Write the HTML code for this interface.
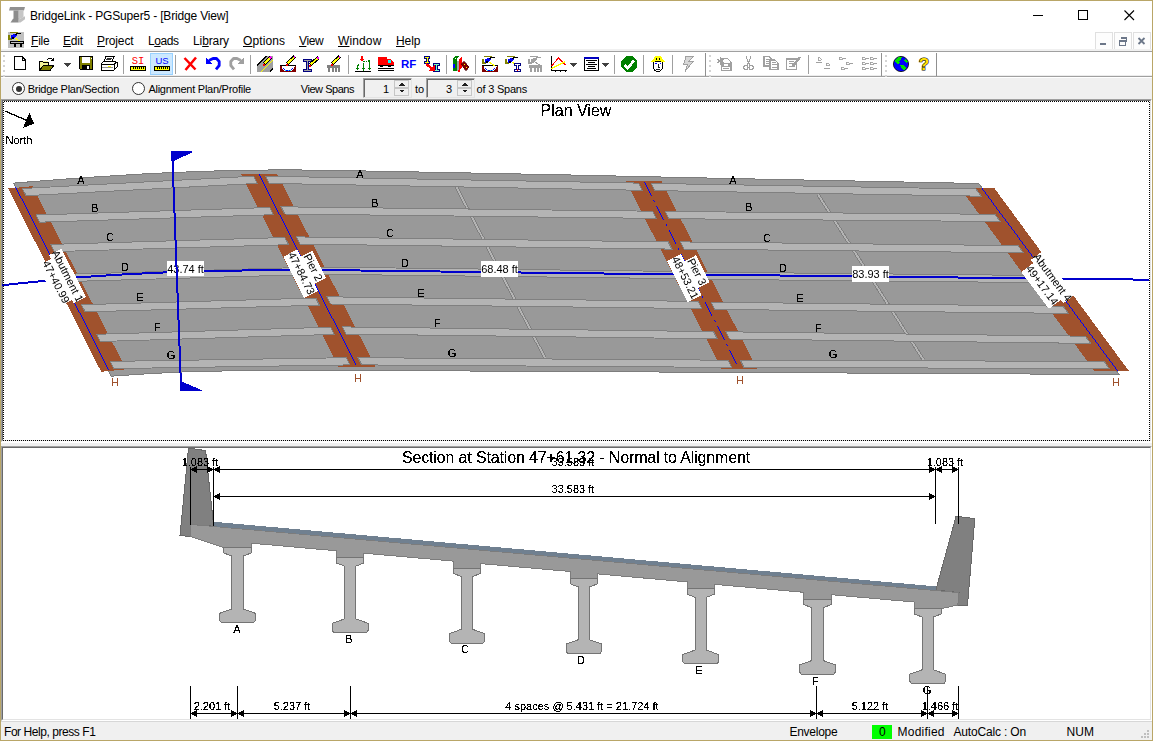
<!DOCTYPE html>
<html><head><meta charset="utf-8"><title>BridgeLink - PGSuper5 - [Bridge View]</title>
<style>
html,body{margin:0;padding:0;background:#fff;}
body{width:1153px;height:741px;overflow:hidden;position:relative;font-family:"Liberation Sans",Arial,sans-serif;font-size:12px;color:#000;}
.abs{position:absolute;}
#frame{position:absolute;left:0;top:0;width:1151px;height:739px;border:1px solid #b9a667;pointer-events:none;z-index:50}
#title{left:30px;top:9px;font-size:12px;white-space:nowrap;}
.menu{top:34px;font-size:12px;white-space:nowrap}
.menu u{text-decoration:underline;text-underline-offset:1px}
#mline{left:1px;top:49px;width:1151px;height:2px;background:#f0f0f0;border-bottom:1px solid #a0a0a0}
#tbline{left:1px;top:75px;width:1151px;height:1px;background:#a0a0a0;border-top:1px solid #ececec;border-bottom:1px solid #fff}
#dlg{left:1px;top:78px;width:1151px;height:21px;background:#f0f0f0;font-size:11px}
#dlg span.t{position:absolute;top:5px;white-space:nowrap}
.radio{position:absolute;top:4px;width:11px;height:11px;border:1px solid #333;border-radius:50%;background:#fff}
.radio i{position:absolute;left:2.5px;top:2.5px;width:6px;height:6px;border-radius:50%;background:#333}
.edit{position:absolute;top:0px;height:20px;background:#f0f0f0;border:1px solid;border-color:#a0a0a0 #e3e3e3 #e3e3e3 #a0a0a0;box-sizing:border-box;box-shadow:inset 1px 1px 0 #696969}
.spin{position:absolute;top:2px;width:15px;height:16px;background:#f0f0f0;border:1px solid #c6c6c6;box-sizing:border-box}.spin i{position:absolute;left:0;right:0;top:6px;height:2px;background:#c6c6c6}
.pane{border-top:1px solid #a0a0a0;border-left:1px solid #a0a0a0;border-right:1px solid #fff;border-bottom:1px solid #fff;background:#fff}
.pane>div{position:absolute;left:0;top:0;right:0;bottom:0;border-top:1px solid #696969;border-left:1px solid #696969;border-right:1px solid #e3e3e3;border-bottom:1px solid #e3e3e3}
#split{left:1px;top:443px;width:1151px;height:3px;background:#f0f0f0}
#status{left:1px;top:721px;width:1151px;height:18px;background:#f0f0f0;border-top:1px solid #d7d7d7;font-size:12px}
#status span{position:absolute;top:3px;white-space:nowrap}
.mdib{position:absolute;top:32px;width:16px;height:16px;border:1px solid #e0e0e0;background:#fdfdfd}
</style></head><body>
<div id="title" class="abs" style="letter-spacing:-0.163px">BridgeLink - PGSuper5 - [Bridge View]</div>
<span class="abs menu" style="left:31px;letter-spacing:-0.21px"><u>F</u>ile</span>
<span class="abs menu" style="left:63px;letter-spacing:-0.17px"><u>E</u>dit</span>
<span class="abs menu" style="left:97px;letter-spacing:-0.12px"><u>P</u>roject</span>
<span class="abs menu" style="left:148px;letter-spacing:-0.42px">L<u>o</u>ads</span>
<span class="abs menu" style="left:193px;letter-spacing:-0.1px">Li<u>b</u>rary</span>
<span class="abs menu" style="left:243px;letter-spacing:0.09px"><u>O</u>ptions</span>
<span class="abs menu" style="left:299px;letter-spacing:-0.4px"><u>V</u>iew</span>
<span class="abs menu" style="left:338px;letter-spacing:0.13px"><u>W</u>indow</span>
<span class="abs menu" style="left:396px;letter-spacing:-0.07px"><u>H</u>elp</span>
<div class="mdib" style="left:1095px"></div><div class="mdib" style="left:1114px"></div><div class="mdib" style="left:1133px"></div>
<div id="mline" class="abs"></div>
<div id="tbline" class="abs"></div>
<div id="dlg" class="abs">
<div class="radio" style="left:11px"><i></i></div>
<span class="t" style="left:26.7px;letter-spacing:-0.28px">Bridge Plan/Section</span>
<div class="radio" style="left:131px"></div>
<span class="t" style="left:147.4px;letter-spacing:-0.256px">Alignment Plan/Profile</span>
<span class="t" style="left:299.8px;letter-spacing:-0.47px">View Spans</span>
<div class="edit" style="left:362px;width:49px"></div><div class="spin" style="left:393px"><i></i></div><span class="t" style="left:382px">1</span>
<span class="t" style="left:414px;letter-spacing:-0.09px">to</span>
<div class="edit" style="left:425px;width:49px"></div><div class="spin" style="left:456px"><i></i></div><span class="t" style="left:445px">3</span>
<span class="t" style="left:475.6px;letter-spacing:-0.22px">of 3 Spans</span>
</div>
<div class="abs pane" style="left:1px;top:99px;width:1149px;height:341px"><div></div></div>
<div id="split" class="abs"></div>
<div class="abs pane" style="left:1px;top:446px;width:1149px;height:273px"><div></div></div>
<div id="status" class="abs">
<span style="left:3px;letter-spacing:-0.44px">For Help, press F1</span>
<span style="left:788.4px;letter-spacing:-0.256px">Envelope</span>
<div class="abs" style="left:871px;top:3px;width:20px;height:14px;background:#00ff00"></div>
<span style="left:878px">0</span>
<span style="left:896.6px;letter-spacing:0.218px">Modified</span>
<span style="left:952.5px;letter-spacing:-0.17px">AutoCalc : On</span>
<span style="left:1065.4px;letter-spacing:0.09px">NUM</span>
</div>
<svg id="gfx" width="1153" height="741" viewBox="0 0 1153 741" style="position:absolute;left:0;top:0" font-family="Liberation Sans, Arial, sans-serif"><defs><filter id="thr" x="0" y="0" width="1153" height="741" filterUnits="userSpaceOnUse" color-interpolation-filters="sRGB"><feComponentTransfer><feFuncA type="discrete" tableValues="0 0 1 1 1"/></feComponentTransfer></filter></defs><g shape-rendering="crispEdges"><polygon points="13.5,183.1 80.0,177.9 150.0,173.5 200.0,171.4 240.0,170.3 288.0,169.8 350.0,170.7 450.0,172.6 576.0,175.1 642.0,176.6 734.0,178.6 864.0,181.2 978.7,183.5 1119.3,374.6 1000.0,373.8 864.0,373.1 738.0,372.4 576.0,371.6 450.0,370.9 357.0,370.4 288.0,370.1 240.0,370.6 184.0,371.9 150.0,373.6 111.2,376.2" fill="#999999" stroke="#7d7d7d" stroke-width="1"/>
<line x1="456.3" y1="186.8" x2="545.0" y2="358.0" stroke="#808080" stroke-width="3.5"/>
<line x1="456.3" y1="186.8" x2="545.0" y2="358.0" stroke="#b4b4b4" stroke-width="1.7"/>
<line x1="818.0" y1="194.5" x2="923.5" y2="360.0" stroke="#808080" stroke-width="3.5"/>
<line x1="818.0" y1="194.5" x2="923.5" y2="360.0" stroke="#b4b4b4" stroke-width="1.7"/>
<polygon points="8.1,188.5 32.5,186.2 126.2,369.3 101.2,371.8" fill="#a0522d"/>
<polygon points="241.2,174.4 277.4,174.4 375.3,366.5 338.5,366.5" fill="#a0522d"/>
<polygon points="625.8,181.1 661.4,181.1 757.3,369.2 721.7,369.2" fill="#a0522d"/>
<polygon points="960.0,188.1 994.3,188.1 1128.6,370.6 1094.3,370.6" fill="#a0522d"/>
<polygon points="22.4,188.5 253.7,176.2 257.3,183.4 26.1,195.7" fill="#b4b4b4" stroke="#808080" stroke-width="1"/>
<polygon points="35.9,215.0 269.6,207.5 273.3,214.7 39.6,222.2" fill="#b4b4b4" stroke="#808080" stroke-width="1"/>
<polygon points="50.9,244.4 284.9,237.5 288.6,244.7 54.5,251.6" fill="#b4b4b4" stroke="#808080" stroke-width="1"/>
<polygon points="66.1,274.3 300.2,267.5 303.9,274.7 69.7,281.5" fill="#b4b4b4" stroke="#808080" stroke-width="1"/>
<polygon points="81.5,304.7 315.8,298.0 319.4,305.2 85.2,311.9" fill="#b4b4b4" stroke="#808080" stroke-width="1"/>
<polygon points="96.6,334.3 330.6,327.2 334.3,334.4 100.3,341.5" fill="#b4b4b4" stroke="#808080" stroke-width="1"/>
<polygon points="110.4,361.4 346.2,357.7 349.8,364.9 114.0,368.6" fill="#b4b4b4" stroke="#808080" stroke-width="1"/>
<polygon points="265.6,176.2 638.5,183.1 642.1,190.3 269.2,183.4" fill="#b4b4b4" stroke="#808080" stroke-width="1"/>
<polygon points="281.2,206.8 652.7,211.2 656.3,218.4 284.8,214.0" fill="#b4b4b4" stroke="#808080" stroke-width="1"/>
<polygon points="296.5,236.9 668.2,241.9 671.8,249.1 300.2,244.1" fill="#b4b4b4" stroke="#808080" stroke-width="1"/>
<polygon points="311.9,267.0 683.2,271.5 686.8,278.7 315.5,274.2" fill="#b4b4b4" stroke="#808080" stroke-width="1"/>
<polygon points="327.0,296.8 698.3,301.4 701.9,308.6 330.7,304.0" fill="#b4b4b4" stroke="#808080" stroke-width="1"/>
<polygon points="342.4,326.9 713.5,331.6 717.1,338.8 346.1,334.1" fill="#b4b4b4" stroke="#808080" stroke-width="1"/>
<polygon points="358.1,357.7 728.0,360.2 731.6,367.4 361.7,364.9" fill="#b4b4b4" stroke="#808080" stroke-width="1"/>
<polygon points="651.1,183.4 976.0,189.0 981.3,196.2 654.7,190.6" fill="#b4b4b4" stroke="#808080" stroke-width="1"/>
<polygon points="665.3,211.5 994.8,214.3 1000.1,221.5 668.9,218.7" fill="#b4b4b4" stroke="#808080" stroke-width="1"/>
<polygon points="680.6,241.9 1018.0,245.6 1023.4,252.8 684.2,249.1" fill="#b4b4b4" stroke="#808080" stroke-width="1"/>
<polygon points="695.8,272.0 1040.2,275.5 1045.6,282.7 699.4,279.2" fill="#b4b4b4" stroke="#808080" stroke-width="1"/>
<polygon points="711.1,302.2 1063.0,306.2 1068.4,313.4 714.7,309.4" fill="#b4b4b4" stroke="#808080" stroke-width="1"/>
<polygon points="726.0,331.8 1085.3,336.2 1090.7,343.4 729.7,339.0" fill="#b4b4b4" stroke="#808080" stroke-width="1"/>
<polygon points="740.4,360.2 1104.1,361.4 1109.4,368.6 744.0,367.4" fill="#b4b4b4" stroke="#808080" stroke-width="1"/>
<path d="M15.5,187V188M16.5,188V190M17.5,190V192M18.5,192V194M19.5,194V196M20.5,196V198M21.5,198V199M22.5,199V201M23.5,201V203M24.5,203V205M25.5,205V207M26.5,207V209M27.5,209V211M28.5,211V213M29.5,213V215M30.5,215V217M31.5,217V219M32.5,219V221M33.5,221V223M34.5,223V225M35.5,225V227M36.5,227V229M37.5,229V231M38.5,231V233M39.5,233V235M40.5,235V237M41.5,237V239M42.5,239V241M43.5,241V243M44.5,243V245M45.5,245V247M46.5,247V249M47.5,249V251M48.5,251V253M49.5,253V255M50.5,255V256M51.5,256V258M52.5,258V260M53.5,260V262M54.5,262V264M55.5,264V266M56.5,266V268M57.5,268V270M58.5,270V272M59.5,272V274M60.5,274V276M61.5,276V278M62.5,278V280M63.5,280V282M64.5,282V284M65.5,284V286M66.5,286V288M67.5,288V290M68.5,290V292M69.5,292V294M70.5,294V296M71.5,296V298M72.5,298V300M73.5,300V302M74.5,302V304M75.5,304V306M76.5,306V308M77.5,308V310M78.5,310V312M79.5,312V313M80.5,313V315M81.5,315V317M82.5,317V319M83.5,319V321M84.5,321V323M85.5,323V325M86.5,325V327M87.5,327V329M88.5,329V331M89.5,331V333M90.5,333V335M91.5,335V337M92.5,337V339M93.5,339V341M94.5,341V343M95.5,343V345M96.5,345V347M97.5,347V349M98.5,349V351M99.5,351V353M100.5,353V355M101.5,355V357M102.5,357V359M103.5,359V361M104.5,361V363M105.5,363V365M106.5,365V367M107.5,367V369M108.5,369V370" stroke="#0000ff" stroke-width="1" fill="none"/>
<path d="M259.5,174V176M260.5,176V178M261.5,178V180M262.5,180V182M263.5,182V184M264.5,184V186M265.5,186V188M266.5,188V190M267.5,190V192M268.5,192V194M269.5,194V196M270.5,196V198M271.5,198V200M272.5,200V202M273.5,202V204M274.5,204V206M275.5,206V208M276.5,208V210M277.5,210V212M278.5,212V214M279.5,214V215M280.5,215V217M281.5,217V219M282.5,219V221M283.5,221V223M284.5,223V225M285.5,225V227M286.5,227V229M287.5,229V231M288.5,231V233M289.5,233V235M290.5,235V237M291.5,237V239M292.5,239V241M293.5,241V243M294.5,243V245M295.5,245V247M296.5,247V249M297.5,249V251M298.5,251V253M299.5,253V255M300.5,255V257M301.5,257V259M302.5,259V261M303.5,261V263M304.5,263V265M305.5,265V267M306.5,267V268M307.5,268V270M308.5,270V272M309.5,272V274M310.5,274V276M311.5,276V278M312.5,278V280M313.5,280V282M314.5,282V284M315.5,284V286M316.5,286V288M317.5,288V290M318.5,290V292M319.5,292V294M320.5,294V296M321.5,296V298M322.5,298V300M323.5,300V302M324.5,302V304M325.5,304V306M326.5,306V308M327.5,308V310M328.5,310V312M329.5,312V314M330.5,314V316M331.5,316V318M332.5,318V319M333.5,319V321M334.5,321V323M335.5,323V325M336.5,325V327M337.5,327V329M338.5,329V331M339.5,331V333M340.5,333V335M341.5,335V337M342.5,337V339M343.5,339V341M344.5,341V343M345.5,343V345M346.5,345V347M347.5,347V349M348.5,349V351M349.5,351V353M350.5,353V355M351.5,355V357M352.5,357V359M353.5,359V361M354.5,361V363M355.5,363V365" stroke="#0000ff" stroke-width="1" fill="none"/>
<path d="M644.5,182V183M645.5,183V185M646.5,185V187M647.5,187V189M648.5,189V191M649.5,191V193M650.5,193V195M651.5,195V196M653.5,200V201M654.5,201V202M656.5,206V207M657.5,207V209M658.5,209V211M659.5,211V213M660.5,213V215M661.5,215V217M662.5,217V219M663.5,219V220M666.5,224V226M669.5,230V232M670.5,232V234M671.5,234V236M672.5,236V238M673.5,238V240M674.5,240V242M675.5,242V244M678.5,248V250M681.5,254V256M682.5,256V258M683.5,258V260M684.5,260V262M685.5,262V264M686.5,264V266M687.5,266V268M690.5,272V274M693.5,278V280M694.5,280V282M695.5,282V284M696.5,284V286M697.5,286V288M698.5,288V290M699.5,290V292M702.5,296V298M705.5,302V304M706.5,304V306M707.5,306V308M708.5,308V310M709.5,310V312M710.5,312V314M711.5,314V316M714.5,320V321M715.5,321V322M717.5,326V327M718.5,327V329M719.5,329V331M720.5,331V333M721.5,333V335M722.5,335V337M723.5,337V339M724.5,339V340M726.5,344V345M727.5,345V346M729.5,350V351M730.5,351V353M731.5,353V355M732.5,355V357M733.5,357V359M734.5,359V361M735.5,361V363M736.5,363V364" stroke="#0000ff" stroke-width="1" fill="none"/>
<path d="M982.5,188V190M983.5,190V191M984.5,191V192M985.5,192V194M986.5,194V195M987.5,195V196M988.5,196V198M989.5,198V199M990.5,199V200M991.5,200V202M992.5,202V203M993.5,203V205M994.5,205V206M995.5,206V207M996.5,207V209M997.5,209V210M998.5,210V211M999.5,211V213M1000.5,213V214M1001.5,214V215M1002.5,215V217M1003.5,217V218M1004.5,218V219M1005.5,219V221M1006.5,221V222M1007.5,222V223M1008.5,223V225M1009.5,225V226M1010.5,226V227M1011.5,227V229M1012.5,229V230M1013.5,230V231M1014.5,231V233M1015.5,233V234M1016.5,234V235M1017.5,235V237M1018.5,237V238M1019.5,238V240M1020.5,240V241M1021.5,241V242M1022.5,242V244M1023.5,244V245M1024.5,245V246M1025.5,246V248M1026.5,248V249M1027.5,249V250M1028.5,250V252M1029.5,252V253M1030.5,253V254M1031.5,254V256M1032.5,256V257M1033.5,257V258M1034.5,258V260M1035.5,260V261M1036.5,261V262M1037.5,262V264M1038.5,264V265M1039.5,265V266M1040.5,266V268M1041.5,268V269M1042.5,269V270M1043.5,270V272M1044.5,272V273M1045.5,273V275M1046.5,275V276M1047.5,276V277M1048.5,277V279M1049.5,279V280M1050.5,280V281M1051.5,281V283M1052.5,283V284M1053.5,284V285M1054.5,285V287M1055.5,287V288M1056.5,288V289M1057.5,289V291M1058.5,291V292M1059.5,292V293M1060.5,293V295M1061.5,295V296M1062.5,296V297M1063.5,297V299M1064.5,299V300M1065.5,300V301M1066.5,301V303M1067.5,303V304M1068.5,304V305M1069.5,305V307M1070.5,307V308M1071.5,308V309M1072.5,309V311M1073.5,311V312M1074.5,312V314M1075.5,314V315M1076.5,315V316M1077.5,316V318M1078.5,318V319M1079.5,319V320M1080.5,320V322M1081.5,322V323M1082.5,323V324M1083.5,324V326M1084.5,326V327M1085.5,327V328M1086.5,328V330M1087.5,330V331M1088.5,331V332M1089.5,332V334M1090.5,334V335M1091.5,335V336M1092.5,336V338M1093.5,338V339M1094.5,339V340M1095.5,340V342M1096.5,342V343M1097.5,343V344M1098.5,344V346M1099.5,346V347M1100.5,347V349M1101.5,349V350M1102.5,350V351M1103.5,351V353M1104.5,353V354M1105.5,354V355M1106.5,355V357M1107.5,357V358M1108.5,358V359M1109.5,359V361M1110.5,361V362M1111.5,362V363M1112.5,363V365M1113.5,365V366M1114.5,366V367M1115.5,367V369M1116.5,369V370M1117.5,370V371" stroke="#0000ff" stroke-width="1" fill="none"/>
<polyline points="2.0,285.2 40.0,281.3 75.0,277.6 120.0,274.6 165.0,272.4 220.0,270.8 288.0,269.9 320.0,270.0 400.0,271.0 480.0,272.0 576.0,273.2 700.0,274.6 851.0,276.3 1029.0,278.3 1149.0,279.7" fill="none" stroke="#0000cd" stroke-width="2"/></g><g filter="url(#thr)"><text x="81.0" y="184.0" font-size="11" fill="#000" text-anchor="middle">A</text>
<text x="95.0" y="212.0" font-size="11" fill="#000" text-anchor="middle">B</text>
<text x="110.0" y="241.0" font-size="11" fill="#000" text-anchor="middle">C</text>
<text x="125.0" y="271.0" font-size="11" fill="#000" text-anchor="middle">D</text>
<text x="140.0" y="301.0" font-size="11" fill="#000" text-anchor="middle">E</text>
<text x="157.0" y="331.0" font-size="11" fill="#000" text-anchor="middle">F</text>
<text x="171.0" y="359.0" font-size="11" fill="#000" text-anchor="middle">G</text>
<text x="360.0" y="178.0" font-size="11" fill="#000" text-anchor="middle">A</text>
<text x="375.0" y="207.0" font-size="11" fill="#000" text-anchor="middle">B</text>
<text x="390.0" y="237.0" font-size="11" fill="#000" text-anchor="middle">C</text>
<text x="405.0" y="267.0" font-size="11" fill="#000" text-anchor="middle">D</text>
<text x="421.0" y="297.0" font-size="11" fill="#000" text-anchor="middle">E</text>
<text x="437.0" y="327.0" font-size="11" fill="#000" text-anchor="middle">F</text>
<text x="452.0" y="357.0" font-size="11" fill="#000" text-anchor="middle">G</text>
<text x="733.0" y="184.0" font-size="11" fill="#000" text-anchor="middle">A</text>
<text x="749.0" y="211.0" font-size="11" fill="#000" text-anchor="middle">B</text>
<text x="767.0" y="242.0" font-size="11" fill="#000" text-anchor="middle">C</text>
<text x="783.0" y="272.0" font-size="11" fill="#000" text-anchor="middle">D</text>
<text x="800.0" y="302.0" font-size="11" fill="#000" text-anchor="middle">E</text>
<text x="818.0" y="332.0" font-size="11" fill="#000" text-anchor="middle">F</text>
<text x="833.0" y="358.0" font-size="11" fill="#000" text-anchor="middle">G</text>
<text x="115.0" y="386.0" font-size="11" fill="#a0522d" text-anchor="middle">H</text>
<text x="358.0" y="382.0" font-size="11" fill="#a0522d" text-anchor="middle">H</text>
<text x="740.0" y="384.0" font-size="11" fill="#a0522d" text-anchor="middle">H</text>
<text x="1116.0" y="386.0" font-size="11" fill="#a0522d" text-anchor="middle">H</text>
<rect x="167" y="261" width="37" height="15" fill="#fff"/>
<text x="185.5" y="272.5" font-size="11" fill="#000" text-anchor="middle">43.74 ft</text>
<rect x="481" y="261" width="37" height="16" fill="#fff"/>
<text x="499.5" y="272.5" font-size="11" fill="#000" text-anchor="middle">68.48 ft</text>
<rect x="852" y="266" width="37" height="16" fill="#fff"/>
<text x="870.5" y="277.5" font-size="11" fill="#000" text-anchor="middle">83.93 ft</text>
<g transform="translate(62.1,278.9) rotate(63.0)"><rect x="-27.0" y="-13" width="54.0" height="13.6" fill="#fff"/><rect x="-23.0" y="0" width="46.0" height="15.5" fill="#fff"/><text x="0.0" y="-2.5" font-size="11" fill="#000" text-anchor="middle">Abutment 1</text><text x="0.0" y="10.5" font-size="11" fill="#000" text-anchor="middle">47+40.99</text></g>
<g transform="translate(307.5,270.2) rotate(63.0)"><rect x="-15.0" y="-13" width="30.0" height="13.6" fill="#fff"/><rect x="-23.0" y="0" width="46.0" height="15.5" fill="#fff"/><text x="0.0" y="-2.5" font-size="11" fill="#000" text-anchor="middle">Pier 2</text><text x="0.0" y="10.5" font-size="11" fill="#000" text-anchor="middle">47+84.73</text></g>
<g transform="translate(691.3,274.6) rotate(63.2)"><rect x="-15.0" y="-13" width="30.0" height="13.6" fill="#fff"/><rect x="-23.0" y="0" width="46.0" height="15.5" fill="#fff"/><text x="0.0" y="-2.5" font-size="11" fill="#000" text-anchor="middle">Pier 3</text><text x="0.0" y="10.5" font-size="11" fill="#000" text-anchor="middle">48+53.21</text></g>
<g transform="translate(1047.6,281.1) rotate(53.4)"><rect x="-27.0" y="-13" width="54.0" height="13.6" fill="#fff"/><rect x="-23.0" y="0" width="46.0" height="15.5" fill="#fff"/><text x="0.0" y="-2.5" font-size="11" fill="#000" text-anchor="middle">Abutment 4</text><text x="0.0" y="10.5" font-size="11" fill="#000" text-anchor="middle">49+17.14</text></g>
<text x="576.0" y="116.0" font-size="16" fill="#000" text-anchor="middle">Plan View</text>
<text x="5.5" y="144.0" font-size="11" fill="#000" text-anchor="start">North</text>
<line x1="5" y1="111" x2="27" y2="120.5" stroke="#000" stroke-width="1.1"/>
<polygon points="29.4,113 33.9,123.6 23.1,127.7" fill="#000"/></g><g shape-rendering="crispEdges"><line x1="172.2" y1="152" x2="181.2" y2="391" stroke="#0000cd" stroke-width="2"/>
<polygon points="170.8,151.3 192,151.3 192,152.5 173.2,161.3 170.8,161.3" fill="#0000cd"/>
<polygon points="180,381.3 181,381.3 201.5,390 201.5,391.4 180,391.4" fill="#0000cd"/><polygon points="188.5,448.1 205.6,450.6 213.7,526.2 190.6,524.4 190.0,536.5 180.0,535.6" fill="#808080" stroke="#686868" stroke-width="1"/>
<polygon points="956.1,516.2 974.8,518.6 967.5,605.3 957.4,605.0 959.0,592.6 935.9,589.9" fill="#808080" stroke="#686868" stroke-width="1"/>
<polygon points="190.6,524.4 959.0,592.6 957.8,605.0 941.4,608.6 914.0,608.6 914.0,602.0 831.2,594.7 831.2,599.3 803.8,599.3 803.8,592.3 714.4,584.3 714.4,588.9 687.0,588.9 687.0,581.9 597.6,573.9 597.6,578.5 570.2,578.5 570.2,571.5 480.7,563.6 480.7,568.1 453.3,568.1 453.3,561.1 363.9,553.2 363.9,557.7 336.5,557.7 336.5,550.8 251.2,543.2 251.2,547.7 223.8,547.7 190.6,536.5" fill="#999999" stroke="#7c7c7c" stroke-width="1"/>
<polygon points="213.7,521.8 936.0,586.4 936.0,590.2 213.7,526.2" fill="#708090"/>
<polygon points="251.2,547.7 251.2,553.0 243.1,556.1 243.1,608.9 255.4,613.3 255.4,620.5 253.7,622.6 221.3,622.6 219.6,620.5 219.6,613.3 231.9,608.9 231.9,556.1 223.8,553.0 223.8,547.7" fill="#b4b4b4" stroke="#747474" stroke-width="1"/>
<polygon points="363.9,557.7 363.9,563.0 355.8,566.1 355.8,618.9 368.1,623.3 368.1,630.5 366.4,632.6 334.0,632.6 332.3,630.5 332.3,623.3 344.6,618.9 344.6,566.1 336.5,563.0 336.5,557.7" fill="#b4b4b4" stroke="#747474" stroke-width="1"/>
<polygon points="480.7,568.1 480.7,573.4 472.6,576.5 472.6,629.3 484.9,633.7 484.9,640.9 483.2,643.0 450.8,643.0 449.1,640.9 449.1,633.7 461.4,629.3 461.4,576.5 453.3,573.4 453.3,568.1" fill="#b4b4b4" stroke="#747474" stroke-width="1"/>
<polygon points="597.6,578.5 597.6,583.8 589.5,586.9 589.5,639.7 601.8,644.1 601.8,651.3 600.1,653.4 567.7,653.4 566.0,651.3 566.0,644.1 578.3,639.7 578.3,586.9 570.2,583.8 570.2,578.5" fill="#b4b4b4" stroke="#747474" stroke-width="1"/>
<polygon points="714.4,588.9 714.4,594.2 706.3,597.3 706.3,650.1 718.6,654.5 718.6,661.7 716.9,663.8 684.5,663.8 682.8,661.7 682.8,654.5 695.1,650.1 695.1,597.3 687.0,594.2 687.0,588.9" fill="#b4b4b4" stroke="#747474" stroke-width="1"/>
<polygon points="831.2,599.3 831.2,604.6 823.1,607.7 823.1,660.5 835.4,664.9 835.4,672.1 833.7,674.2 801.3,674.2 799.6,672.1 799.6,664.9 811.9,660.5 811.9,607.7 803.8,604.6 803.8,599.3" fill="#b4b4b4" stroke="#747474" stroke-width="1"/>
<polygon points="941.4,608.6 941.4,613.9 933.3,617.0 933.3,669.8 945.6,674.2 945.6,681.4 943.9,683.5 911.5,683.5 909.8,681.4 909.8,674.2 922.1,669.8 922.1,617.0 914.0,613.9 914.0,608.6" fill="#b4b4b4" stroke="#747474" stroke-width="1"/></g><g filter="url(#thr)"><text x="576.0" y="463.0" font-size="16" fill="#000" text-anchor="middle" letter-spacing="-0.146">Section at Station 47+61.32 - Normal to Alignment</text>
<line x1="190.5" y1="467.0" x2="190.5" y2="525.0" stroke="#000" stroke-width="1"/>
<line x1="213.5" y1="467.0" x2="213.5" y2="526.0" stroke="#000" stroke-width="1"/>
<line x1="935.5" y1="467.0" x2="935.5" y2="524.0" stroke="#000" stroke-width="1"/>
<line x1="958.5" y1="467.0" x2="958.5" y2="524.0" stroke="#000" stroke-width="1"/>
<line x1="190.5" y1="469.5" x2="213.5" y2="469.5" stroke="#000" stroke-width="1"/><polygon points="190.5,469.5 197.0,466.3 197.0,472.7" fill="#000"/><polygon points="213.5,469.5 207.0,466.3 207.0,472.7" fill="#000"/>
<line x1="213.5" y1="469.5" x2="935.5" y2="469.5" stroke="#000" stroke-width="1"/><polygon points="213.5,469.5 220.0,466.3 220.0,472.7" fill="#000"/><polygon points="935.5,469.5 929.0,466.3 929.0,472.7" fill="#000"/>
<line x1="935.5" y1="469.5" x2="958.5" y2="469.5" stroke="#000" stroke-width="1"/><polygon points="935.5,469.5 942.0,466.3 942.0,472.7" fill="#000"/><polygon points="958.5,469.5 952.0,466.3 952.0,472.7" fill="#000"/>
<line x1="213.5" y1="496.5" x2="935.5" y2="496.5" stroke="#000" stroke-width="1"/><polygon points="213.5,496.5 220.0,493.3 220.0,499.7" fill="#000"/><polygon points="935.5,496.5 929.0,493.3 929.0,499.7" fill="#000"/>
<text x="200.0" y="466.0" font-size="11" fill="#000" text-anchor="middle">1.083 ft</text>
<text x="945.0" y="466.0" font-size="11" fill="#000" text-anchor="middle">1.083 ft</text>
<text x="573.0" y="466.0" font-size="11" fill="#000" text-anchor="middle">33.583 ft</text>
<text x="573.0" y="493.0" font-size="11" fill="#000" text-anchor="middle">33.583 ft</text>
<line x1="190.5" y1="686.0" x2="190.5" y2="719.0" stroke="#000" stroke-width="1"/>
<line x1="237.5" y1="686.0" x2="237.5" y2="719.0" stroke="#000" stroke-width="1"/>
<line x1="350.5" y1="686.0" x2="350.5" y2="719.0" stroke="#000" stroke-width="1"/>
<line x1="816.5" y1="686.0" x2="816.5" y2="719.0" stroke="#000" stroke-width="1"/>
<line x1="927.5" y1="686.0" x2="927.5" y2="719.0" stroke="#000" stroke-width="1"/>
<line x1="958.5" y1="686.0" x2="958.5" y2="719.0" stroke="#000" stroke-width="1"/>
<line x1="190.5" y1="713.5" x2="237.5" y2="713.5" stroke="#000" stroke-width="1"/><polygon points="190.5,713.5 197.0,710.3 197.0,716.7" fill="#000"/><polygon points="237.5,713.5 231.0,710.3 231.0,716.7" fill="#000"/>
<line x1="237.5" y1="713.5" x2="350.5" y2="713.5" stroke="#000" stroke-width="1"/><polygon points="237.5,713.5 244.0,710.3 244.0,716.7" fill="#000"/><polygon points="350.5,713.5 344.0,710.3 344.0,716.7" fill="#000"/>
<line x1="350.5" y1="713.5" x2="816.5" y2="713.5" stroke="#000" stroke-width="1"/><polygon points="350.5,713.5 357.0,710.3 357.0,716.7" fill="#000"/><polygon points="816.5,713.5 810.0,710.3 810.0,716.7" fill="#000"/>
<line x1="816.5" y1="713.5" x2="927.5" y2="713.5" stroke="#000" stroke-width="1"/><polygon points="816.5,713.5 823.0,710.3 823.0,716.7" fill="#000"/><polygon points="927.5,713.5 921.0,710.3 921.0,716.7" fill="#000"/>
<line x1="927.5" y1="713.5" x2="958.5" y2="713.5" stroke="#000" stroke-width="1"/><polygon points="927.5,713.5 934.0,710.3 934.0,716.7" fill="#000"/><polygon points="958.5,713.5 952.0,710.3 952.0,716.7" fill="#000"/>
<text x="212.0" y="710.0" font-size="11" fill="#000" text-anchor="middle">2.201 ft</text>
<text x="292.0" y="710.0" font-size="11" fill="#000" text-anchor="middle">5.237 ft</text>
<text x="582.0" y="710.0" font-size="11" fill="#000" text-anchor="middle">4 spaces @ 5.431 ft = 21.724 ft</text>
<text x="870.0" y="710.0" font-size="11" fill="#000" text-anchor="middle">5.122 ft</text>
<text x="940.0" y="710.0" font-size="11" fill="#000" text-anchor="middle">1.466 ft</text>
<text x="237.0" y="633.0" font-size="11" fill="#000" text-anchor="middle">A</text>
<text x="349.0" y="643.0" font-size="11" fill="#000" text-anchor="middle">B</text>
<text x="465.0" y="653.0" font-size="11" fill="#000" text-anchor="middle">C</text>
<text x="581.0" y="664.0" font-size="11" fill="#000" text-anchor="middle">D</text>
<text x="699.0" y="674.0" font-size="11" fill="#000" text-anchor="middle">E</text>
<text x="815.0" y="685.0" font-size="11" fill="#000" text-anchor="middle">F</text>
<text x="927.0" y="694.0" font-size="11" fill="#000" text-anchor="middle">G</text></g><g shape-rendering="crispEdges"><rect x="3" y="55" width="2" height="2" fill="#d4d4d4"/><rect x="3" y="60" width="2" height="2" fill="#d4d4d4"/><rect x="3" y="65" width="2" height="2" fill="#d4d4d4"/><rect x="3" y="70" width="2" height="2" fill="#d4d4d4"/><rect x="3" y="75" width="2" height="2" fill="#d4d4d4"/>
<g transform="translate(14,56)"><path d="M0.5,0.5 h7.5 l3.5,3.5 v9.5 h-11 z" fill="#fff" stroke="#000" stroke-width="1"/><path d="M8,0.5 v3.5 h3.5" fill="none" stroke="#000" stroke-width="1"/></g>
<g transform="translate(39,57)"><rect x="0" y="4" width="9" height="8" fill="#f4f49a"/><path d="M0.5,13 v-9 h2.5 l1,1 h5 v3" fill="none" stroke="#000" stroke-width="1"/><path d="M0.5,13.5 l4,-5.5 h10.5 l-4,5.5 z" fill="#808000" stroke="#000" stroke-width="1"/><path d="M8,3 q3,-4 6,0" fill="none" stroke="#000" stroke-width="1"/><path d="M12,3.5 h3 v-3 z" fill="#000" stroke="none" stroke-width="1"/></g>
<path d="M63.5,63 h8 l-4,4 z" fill="#404040" stroke="none" stroke-width="1"/>
<g transform="translate(79,56)"><path d="M0.5,0.5 h13 v13 h-12 l-1,-1 z" fill="#808000" stroke="#000" stroke-width="1"/><rect x="3" y="1" width="8" height="6" fill="#fff"/><rect x="3" y="9" width="8" height="4.5" fill="#000"/><rect x="8" y="10" width="2" height="3" fill="#fff"/><rect x="11.5" y="1.5" width="1" height="1" fill="#fff"/></g>
<g transform="translate(101,56)"><path d="M5,0.5 h8 l-2,5 h-8 z" fill="#fff" stroke="#000" stroke-width="1"/><path d="M5.5,2 h5 M4.8,3.6 h5" fill="none" stroke="#000" stroke-width="0.8"/><path d="M0.5,7.5 l3,-2.5 h10 l2.5,1.5 v4.5 l-3,3 h-12.5 z" fill="#fff" stroke="#000" stroke-width="1"/><path d="M0.5,8 h12.5 l3,-2 M13,8 v6" fill="none" stroke="#000" stroke-width="1"/><rect x="7" y="9.5" width="3" height="1.6" fill="#ffff00"/><path d="M1,11.5 h11" fill="none" stroke="#909090" stroke-width="1"/></g>
<rect x="123" y="55" width="1" height="19" fill="#a0a0a0"/>
<g transform="translate(130,56)"><text x="8" y="8" font-family="Liberation Mono,monospace" font-size="10.5" text-anchor="middle" fill="#ff0000">SI</text><rect x="0.5" y="10.5" width="15" height="4" fill="#ffff00" stroke="#000" stroke-width="1"/><rect x="2.5" y="11" width="1" height="2" fill="#000"/><rect x="4.5" y="11" width="1" height="2" fill="#000"/><rect x="6.5" y="11" width="1" height="2" fill="#000"/><rect x="8.5" y="11" width="1" height="2" fill="#000"/><rect x="10.5" y="11" width="1" height="2" fill="#000"/><rect x="12.5" y="11" width="1" height="2" fill="#000"/></g>
<rect x="150.5" y="53.5" width="22" height="21" fill="#cce8ff" stroke="#99d1ff" stroke-width="1"/>
<g transform="translate(154,56)"><text x="8" y="8" font-family="Liberation Sans,sans-serif" font-size="9.5" text-anchor="middle" fill="#0000ff">US</text><rect x="0.5" y="10.5" width="15" height="4" fill="#ffff00" stroke="#000" stroke-width="1"/><rect x="2.5" y="11" width="1" height="2" fill="#000"/><rect x="4.5" y="11" width="1" height="2" fill="#000"/><rect x="6.5" y="11" width="1" height="2" fill="#000"/><rect x="8.5" y="11" width="1" height="2" fill="#000"/><rect x="10.5" y="11" width="1" height="2" fill="#000"/><rect x="12.5" y="11" width="1" height="2" fill="#000"/></g>
<rect x="175" y="55" width="1" height="19" fill="#a0a0a0"/>
<g transform="translate(184,57)"><path d="M0.5,1 L11.5,12.5 M12,0.5 L1.5,13" fill="none" stroke="#ff0000" stroke-width="2.5" shape-rendering="auto"/></g>
<g transform="translate(206,57)"><path d="M3,3.5 L7,1.5 H10.5 L13.2,4.5 V8.5 L10,12.3" fill="none" stroke="#0000ff" stroke-width="2.8" stroke-linejoin="round" shape-rendering="auto"/><path d="M0,0 V6.5 H6 Z" fill="#0000ff" stroke="none" stroke-width="1"/></g>
<g transform="translate(244,57) scale(-1,1)"><path d="M3,3.5 L7,1.5 H10.5 L13.2,4.5 V8.5 L10,12.3" fill="none" stroke="#a0a0a0" stroke-width="2.8" stroke-linejoin="round" shape-rendering="auto"/><path d="M0,0 V6.5 H6 Z" fill="#a0a0a0" stroke="none" stroke-width="1"/></g>
<rect x="250" y="55" width="1" height="19" fill="#a0a0a0"/>
<g transform="translate(257,56)"><path d="M0,16 v-7 l9,-9 h7 v12 l-3,4 z" fill="#a0a0a0" stroke="none" stroke-width="1"/><path d="M0,9.5 l9.5,-9.5" fill="none" stroke="#000" stroke-width="1.2"/><path d="M13,16 l3,-4" fill="none" stroke="#000" stroke-width="1.2"/><path d="M4,16 l12,-12" fill="none" stroke="#ffff00" stroke-width="1.2"/><path d="M7,8 L14,1" fill="none" stroke="#000" stroke-width="3.6"/><path d="M7.6,7.4 L13.2,1.8" fill="none" stroke="#ffff00" stroke-width="1.8"/><path d="M12.8,2.2 l1.4,-1.4" fill="none" stroke="#ff00ff" stroke-width="1.8"/><rect x="6" y="7.5" width="2" height="2" fill="#ff0000"/></g>
<g transform="translate(280,56)"><rect x="0" y="9" width="16" height="7" fill="#800000"/><path d="M1.5,10 h13 v1 q-1,4.5 -6.5,4.5 q-5.5,0 -6.5,-4.5 z" fill="#fff" stroke="none" stroke-width="1"/><path d="M3,12.2 q5,4 10,0 l-1,2 q-4,2.5 -8,0 z" fill="#0000ff" stroke="none" stroke-width="1"/><rect x="5" y="13.6" width="1" height="1" fill="#0ff"/><rect x="7.5" y="14" width="1" height="1" fill="#0ff"/><rect x="10" y="13.6" width="1" height="1" fill="#0ff"/><rect x="0" y="9" width="16" height="1" fill="#000"/><path d="M7,8 L15,0.5" fill="none" stroke="#000" stroke-width="3.6"/><path d="M7.6,7.4 L14.2,1.3" fill="none" stroke="#ffff00" stroke-width="1.8"/><path d="M13.8,1.7 l1.4,-1.4" fill="none" stroke="#ff00ff" stroke-width="1.8"/><rect x="6" y="7.5" width="2" height="2" fill="#ff0000"/></g>
<g transform="translate(303,56)"><path d="M0.5,3.5 h8 v2 h-2.6399999999999997 v8 h2.6399999999999997 v2 h-8 v-2 h2.6399999999999997 v-8 h-2.6399999999999997 z" fill="#a0a0a0" stroke="#000080" stroke-width="1"/><path d="M7,9 L15.5,1.5" fill="none" stroke="#000" stroke-width="3.6"/><path d="M7.6,8.4 L14.7,2.3" fill="none" stroke="#ffff00" stroke-width="1.8"/><path d="M14.3,2.7 l1.4,-1.4" fill="none" stroke="#ff00ff" stroke-width="1.8"/><rect x="6" y="8.5" width="2" height="2" fill="#ff0000"/></g>
<g transform="translate(326,56)"><rect x="1" y="9" width="13" height="3" fill="#808080"/><rect x="2" y="12" width="2" height="4" fill="#808080"/><rect x="5.5" y="12" width="2" height="4" fill="#808080"/><rect x="9" y="12" width="2" height="4" fill="#808080"/><rect x="12" y="12" width="2" height="4" fill="#808080"/><path d="M6,8 L14,0.5" fill="none" stroke="#000" stroke-width="3.6"/><path d="M6.6,7.4 L13.2,1.3" fill="none" stroke="#ffff00" stroke-width="1.8"/><path d="M12.8,1.7 l1.4,-1.4" fill="none" stroke="#ff00ff" stroke-width="1.8"/><rect x="5" y="7.5" width="2" height="2" fill="#ff0000"/></g>
<rect x="348" y="55" width="1" height="19" fill="#a0a0a0"/>
<g transform="translate(355,56)"><path d="M0,15.5 h16" fill="none" stroke="#000" stroke-width="1"/><path d="M2.5,9 v5 M8.5,6.5 v8 M14.5,5 v9" fill="none" stroke="#008000" stroke-width="1.2"/><path d="M2.5,9.5 l3,-2 M8.5,6 l3,-1 M12.5,5 h2" fill="none" stroke="#008000" stroke-width="1.2" stroke-dasharray="2 1"/><path d="M0.5,11.5 h4 l-2,3 z M6.5,11.5 h4 l-2,3 z M12.5,11.5 h4 l-2,3 z" fill="#008000" stroke="none" stroke-width="1"/><path d="M7,0 v4" fill="none" stroke="#ff0000" stroke-width="1.2"/><path d="M5,3 h4 l-2,3 z" fill="#ff0000" stroke="none" stroke-width="1"/></g>
<g transform="translate(378,57)"><rect x="0" y="0" width="9" height="8" fill="#ff0000"/><path d="M9,2 h4 l3,3.5 v3.5 h-7 z" fill="#ff0000" stroke="none" stroke-width="1"/><rect x="10" y="3" width="2.5" height="2.5" fill="#00ffff"/><rect x="0" y="8" width="16" height="1.2" fill="#000"/><rect x="2" y="8" width="3" height="2.4" fill="#000"/><rect x="10" y="8" width="3" height="2.4" fill="#000"/><rect x="0" y="11" width="16" height="1" fill="#000"/><rect x="0" y="13" width="16" height="1" fill="#000"/></g>
<text x="401" y="68" font-family="Liberation Sans,sans-serif" font-weight="bold" font-size="11.5" fill="#0000ff">RF</text>
<g transform="translate(424,56)"><path d="M0.5,0.5 h5 v2 h-1.5 v3 h1.5 v2 h-5 v-2 h1.5 v-3 h-1.5 z" fill="#ffff00" stroke="#000080" stroke-width="1"/><path d="M9.5,7.5 h6 v2 h-1.98 v4 h1.98 v2 h-6 v-2 h1.98 v-4 h-1.98 z" fill="#80ffc0" stroke="#000080" stroke-width="1"/><path d="M2,8 l8,6" fill="none" stroke="#ff0000" stroke-width="2.4"/><path d="M4,15 h7 v-6 z" fill="#ff0000" stroke="none" stroke-width="1"/></g>
<rect x="446" y="55" width="1" height="19" fill="#a0a0a0"/>
<g transform="translate(453,56)"><path d="M0,3 l2,-3 h2 l-2,3 z M2.5,3 l2,-3 h1.5 l-2,3 z" fill="#008000" stroke="none" stroke-width="1"/><rect x="0" y="3" width="2.2" height="12" fill="#008000"/><rect x="2.2" y="3" width="1.8" height="12" fill="#008000"/><rect x="0" y="8" width="2" height="4" fill="#0000ff"/><rect x="4" y="5" width="2" height="10" fill="#a0a0a0"/><path d="M6,15 v-11 l3,-4 v11 z" fill="#ff0000" stroke="none" stroke-width="1"/><rect x="5" y="14" width="2" height="2" fill="#ff0000"/><path d="M8,8 l3,-3 l5,6 l-3,4 z" fill="#800000" stroke="#400000" stroke-width="0.6"/><rect x="10.5" y="8" width="1" height="1" fill="#ffff00"/><rect x="12.5" y="10.5" width="1" height="1" fill="#ffff00"/></g>
<rect x="475" y="55" width="1" height="19" fill="#a0a0a0"/>
<g transform="translate(482,56)"><rect x="0" y="9" width="16" height="7" fill="#800000"/><path d="M1.5,10 h13 v1 q-1,4.5 -6.5,4.5 q-5.5,0 -6.5,-4.5 z" fill="#fff" stroke="none" stroke-width="1"/><path d="M3,12.2 q5,4 10,0 l-1,2 q-4,2.5 -8,0 z" fill="#0000ff" stroke="none" stroke-width="1"/><rect x="5" y="13.6" width="1" height="1" fill="#0ff"/><rect x="7.5" y="14" width="1" height="1" fill="#0ff"/><rect x="10" y="13.6" width="1" height="1" fill="#0ff"/><rect x="0" y="9" width="16" height="1" fill="#000"/><path d="M2,0.7 h8" fill="none" stroke="#808000" stroke-width="1.4"/><path d="M0.8,2.5 v4.5 h3" fill="none" stroke="#808000" stroke-width="1.4"/><path d="M3,3.5 l2.5,-1.5 l3,1.5 l-3,4 l-2.5,-1 z" fill="#0000ff" stroke="none" stroke-width="1"/><path d="M7,3 l3.5,-1.8 h2.5" fill="none" stroke="#000" stroke-width="1.3"/><path d="M7.5,6 l5,4" fill="none" stroke="#ffff00" stroke-width="1.2"/><rect x="4" y="4.5" width="2" height="2" fill="#000"/></g>
<g transform="translate(505,56)"><path d="M2,0.7 h8" fill="none" stroke="#808000" stroke-width="1.4"/><path d="M0.8,2.5 v4.5 h3" fill="none" stroke="#808000" stroke-width="1.4"/><path d="M3,3.5 l2.5,-1.5 l3,1.5 l-3,4 l-2.5,-1 z" fill="#0000ff" stroke="none" stroke-width="1"/><path d="M7,3 l3.5,-1.8 h2.5" fill="none" stroke="#000" stroke-width="1.3"/><path d="M7.5,6 l5,4" fill="none" stroke="#ffff00" stroke-width="1.2"/><rect x="4" y="4.5" width="2" height="2" fill="#000"/><path d="M9.5,7.5 h6 v2 h-1.98 v4 h1.98 v2 h-6 v-2 h1.98 v-4 h-1.98 z" fill="#fff" stroke="#000080" stroke-width="1"/><rect x="12" y="13" width="1" height="2" fill="#ff0000"/></g>
<g transform="translate(528,56)"><path d="M2,0.7 h8" fill="none" stroke="#a0a0a0" stroke-width="1.4"/><path d="M0.8,2.5 v4.5 h3" fill="none" stroke="#a0a0a0" stroke-width="1.4"/><path d="M3,3.5 l2.5,-1.5 l3,1.5 l-3,4 l-2.5,-1 z" fill="#a0a0a0" stroke="none" stroke-width="1"/><path d="M7,3 l3.5,-1.8 h2.5" fill="none" stroke="#a0a0a0" stroke-width="1.3"/><path d="M7.5,6 l5,4" fill="none" stroke="#a0a0a0" stroke-width="1.2"/><rect x="4" y="4.5" width="2" height="2" fill="#a0a0a0"/><rect x="1" y="9" width="13" height="3" fill="#a0a0a0"/><rect x="2" y="12" width="2" height="4" fill="#a0a0a0"/><rect x="5.5" y="12" width="2" height="4" fill="#a0a0a0"/><rect x="9" y="12" width="2" height="4" fill="#a0a0a0"/><rect x="12" y="12" width="2" height="4" fill="#a0a0a0"/></g>
<g transform="translate(550.5,56)"><path d="M1,0 v14.5 h15" fill="none" stroke="#000" stroke-width="1.2"/><path d="M0,4 h1 M0,8 h1 M0,12 h1 M5,14 v1.5 M10,14 v1.5 M15,14 v1.5" fill="none" stroke="#000" stroke-width="1"/><path d="M1,10 l7,-8 l7,7" fill="none" stroke="#ff0000" stroke-width="1.1"/><path d="M1,12.5 l14,-7" fill="none" stroke="#ffff00" stroke-width="1.4"/></g>
<path d="M569,63 h8 l-4,4 z" fill="#404040" stroke="none" stroke-width="1"/>
<g transform="translate(584,56)"><rect x="0.5" y="1.5" width="14" height="12.5" fill="#fff" stroke="#000" stroke-width="1"/><rect x="0" y="1" width="15" height="1.6" fill="#0000c0"/><path d="M2,4.5 h11 M4,6.5 h7 M2,8.5 h11 M4,10.5 h7 M3,12.5 h9" fill="none" stroke="#000" stroke-width="1"/></g>
<path d="M601,63 h8 l-4,4 z" fill="#404040" stroke="none" stroke-width="1"/>
<rect x="614" y="55" width="1" height="19" fill="#a0a0a0"/>
<g transform="translate(621,56)"><path d="M5,0 h6 l5,5 v6 l-5,5 h-6 l-5,-5 v-6 z" fill="#008000" stroke="none" stroke-width="1"/><path d="M3.5,9 l3,3.5 l6.5,-8" fill="none" stroke="#fff" stroke-width="2.6"/></g>
<rect x="643" y="55" width="1" height="19" fill="#a0a0a0"/>
<g transform="translate(650,56)"><path d="M3,6 q5,-2 10,0 l-0.5,6 q-1.5,3.5 -4.5,4 q-3,-0.5 -4.5,-4 z" fill="#fff" stroke="#000" stroke-width="1"/><path d="M0,6.5 q2,-1 3,-3 q2,-4 5,-4 q3,0 5,4 q1,2 3,3 q-8,-2.5 -16,0 z" fill="#ffff00" stroke="none" stroke-width="1"/><rect x="5" y="6.5" width="1.5" height="1.5" fill="#0000ff"/><rect x="9.5" y="6.5" width="1.5" height="1.5" fill="#0000ff"/><path d="M8,8 v3 h1.5 M6,13 h4" fill="none" stroke="#000" stroke-width="0.9"/><rect x="6" y="2" width="1" height="1.5" fill="#000"/><rect x="9" y="2" width="1" height="1.5" fill="#000"/></g>
<rect x="672" y="55" width="1" height="19" fill="#a0a0a0"/>
<g transform="translate(681,56)"><path d="M5,0.5 h7 l-4,5 h4 l-8,10 l2.5,-7 h-4 z" fill="#d8d8d8" stroke="#a0a0a0" stroke-width="1"/></g>
<rect x="705" y="53" width="1" height="23" fill="#909090"/>
<rect x="709" y="55" width="2" height="2" fill="#d4d4d4"/><rect x="709" y="60" width="2" height="2" fill="#d4d4d4"/><rect x="709" y="65" width="2" height="2" fill="#d4d4d4"/><rect x="709" y="70" width="2" height="2" fill="#d4d4d4"/><rect x="709" y="75" width="2" height="2" fill="#d4d4d4"/>
<g transform="translate(717,56)"><path d="M4.5,2.5 h6 l3.5,3.5 v8.5 h-9.5 z" fill="#fff" stroke="#a0a0a0" stroke-width="1.2"/><path d="M6,7.5 h6 v3 h-6 z M6,12.5 h6" fill="none" stroke="#a0a0a0" stroke-width="1.2"/><path d="M0,3 l7,4 M0,7 l7,-4 M3.5,0.5 v8" fill="none" stroke="#a0a0a0" stroke-width="1.3"/></g>
<g transform="translate(743,56)"><path d="M3,0.5 l3.5,8.5 M8,0.5 l-3.5,8.5" fill="none" stroke="#a0a0a0" stroke-width="1.2"/><circle cx="2.8" cy="11.5" r="2.1" fill="none" stroke="#a0a0a0" stroke-width="1.2"/><circle cx="8.2" cy="11.5" r="2.1" fill="none" stroke="#a0a0a0" stroke-width="1.2"/></g>
<g transform="translate(763.5,56)"><path d="M0.5,0.5 h5 l3,3 v6.5 h-8 z" fill="#fff" stroke="#a0a0a0" stroke-width="1.2"/><path d="M2.0,3.0 h4 M2.0,5.3 h5 M2.0,7.5 h5" fill="none" stroke="#a0a0a0" stroke-width="1"/><path d="M6.5,4 h5 l3,3 v6.5 h-8 z" fill="#fff" stroke="#a0a0a0" stroke-width="1.2"/><path d="M8.0,6.5 h4 M8.0,8.8 h5 M8.0,11 h5" fill="none" stroke="#a0a0a0" stroke-width="1"/></g>
<g transform="translate(786,56)"><rect x="0.5" y="3" width="10" height="10.5" fill="#fff" stroke="#a0a0a0" stroke-width="1.2"/><path d="M2.5,5.5 h5 M2.5,7.8 h4 M2.5,10.5 h6" fill="none" stroke="#a0a0a0" stroke-width="1"/><path d="M6,11 l8,-10" fill="none" stroke="#a0a0a0" stroke-width="2.6"/></g>
<rect x="808" y="55" width="1" height="19" fill="#a0a0a0"/>
<g transform="translate(816,56)"><path d="M2,1.5 h2.2 l1,1 v1.5 h-3.2 z" fill="#fff" stroke="#a0a0a0" stroke-width="0.9"/><path d="M0,6.5 h6" fill="none" stroke="#a0a0a0" stroke-width="1"/><path d="M10,7 h2.2 l1,1 v1.5 h-3.2 z" fill="#fff" stroke="#a0a0a0" stroke-width="0.9"/><path d="M8,12.5 h6" fill="none" stroke="#a0a0a0" stroke-width="1"/></g>
<g transform="translate(838,56)"><path d="M1,1 h2.2 l1,1 v1.5 h-3.2 z" fill="#fff" stroke="#a0a0a0" stroke-width="0.9"/><path d="M5,2.5 h3" fill="none" stroke="#a0a0a0" stroke-width="1"/><path d="M8,6 h2.2 l1,1 v1.5 h-3.2 z" fill="#fff" stroke="#a0a0a0" stroke-width="0.9"/><path d="M12,7.5 h3" fill="none" stroke="#a0a0a0" stroke-width="1"/><path d="M3,11 h2.2 l1,1 v1.5 h-3.2 z" fill="#fff" stroke="#a0a0a0" stroke-width="0.9"/><path d="M7,12.5 h3" fill="none" stroke="#a0a0a0" stroke-width="1"/></g>
<g transform="translate(861,56)"><path d="M1,1 h2.2 l1,1 v1.5 h-3.2 z" fill="#fff" stroke="#a0a0a0" stroke-width="0.9"/><path d="M5,2.5 h3" fill="none" stroke="#a0a0a0" stroke-width="1"/><path d="M1,6 h2.2 l1,1 v1.5 h-3.2 z" fill="#fff" stroke="#a0a0a0" stroke-width="0.9"/><path d="M5,7.5 h3" fill="none" stroke="#a0a0a0" stroke-width="1"/><path d="M1,11 h2.2 l1,1 v1.5 h-3.2 z" fill="#fff" stroke="#a0a0a0" stroke-width="0.9"/><path d="M5,12.5 h3" fill="none" stroke="#a0a0a0" stroke-width="1"/><path d="M9,1 h2.2 l1,1 v1.5 h-3.2 z" fill="#fff" stroke="#a0a0a0" stroke-width="0.9"/><path d="M13,2.5 h3" fill="none" stroke="#a0a0a0" stroke-width="1"/><path d="M9,6 h2.2 l1,1 v1.5 h-3.2 z" fill="#fff" stroke="#a0a0a0" stroke-width="0.9"/><path d="M13,7.5 h3" fill="none" stroke="#a0a0a0" stroke-width="1"/><path d="M9,11 h2.2 l1,1 v1.5 h-3.2 z" fill="#fff" stroke="#a0a0a0" stroke-width="0.9"/><path d="M13,12.5 h3" fill="none" stroke="#a0a0a0" stroke-width="1"/></g>
<rect x="881" y="53" width="1" height="23" fill="#909090"/>
<rect x="885" y="55" width="2" height="2" fill="#d4d4d4"/><rect x="885" y="60" width="2" height="2" fill="#d4d4d4"/><rect x="885" y="65" width="2" height="2" fill="#d4d4d4"/><rect x="885" y="70" width="2" height="2" fill="#d4d4d4"/><rect x="885" y="75" width="2" height="2" fill="#d4d4d4"/>
<g transform="translate(893,56)"><circle cx="8" cy="8" r="7.6" fill="#0000ff" stroke="#000" stroke-width="0.8" shape-rendering="auto"/><path d="M3,3 l3,-2 l3,0 l-1,3 l-2,1 l1,2 l-3,1 l-2,-2 z M10,4 l3,-1 l2,3 l-2,1 z M7,9 l4,0 l2,3 l-2,3 l-2,-2 z" fill="#00e000" stroke="none" stroke-width="1"/></g>
<g transform="translate(919,56)"><text x="5" y="13.5" font-family="Liberation Sans,sans-serif" font-weight="bold" font-size="17" text-anchor="middle" fill="#ffe000" stroke="#000" stroke-width="1.1" paint-order="stroke">?</text></g>
<rect x="936" y="53" width="1" height="23" fill="#909090"/><defs><pattern id="chk" width="2" height="2" patternUnits="userSpaceOnUse"><rect x="1" y="0" width="1" height="1" fill="#000"/><rect x="0" y="1" width="1" height="1" fill="#000"/></pattern></defs><rect x="3" y="101" width="1147" height="1" fill="url(#chk)"/><rect x="3" y="440" width="1147" height="1" fill="url(#chk)"/><rect x="3" y="101" width="1" height="340" fill="url(#chk)"/><rect x="1149" y="101" width="1" height="340" fill="url(#chk)"/><rect x="1033" y="15" width="10" height="1" fill="#000"/><rect x="1078.5" y="10.5" width="9" height="9" fill="none" stroke="#000" stroke-width="1"/><path d="M1124.5,10.5 l9.5,9.5 M1134,10.5 l-9.5,9.5" stroke="#000" stroke-width="1.1" fill="none" shape-rendering="auto"/><rect x="1100" y="43" width="6" height="2" fill="#6c7789"/><path d="M1121.5,37.5 h5 v4" stroke="#6c7789" fill="none"/><rect x="1119" y="40" width="6" height="5" fill="none" stroke="#6c7789" stroke-width="1" transform="translate(.5,.5)"/><rect x="1119" y="40" width="7" height="2" fill="#6c7789"/><rect x="1121" y="37" width="6" height="2" fill="#6c7789"/><path d="M1138.5,38 l6,6 M1144.5,38 l-6,6" stroke="#6c7789" stroke-width="1.8" fill="none" shape-rendering="auto"/><g shape-rendering="auto"><polygon points="10,7 25,7 24,10.5 9,10.5" fill="#909090"/><rect x="13.5" y="10.5" width="5.2" height="8.5" fill="#8c8c8c"/><polygon points="18.7,10.5 23.5,10.5 23.5,17.2 18.7,19.5" fill="#c6c6c6"/><polygon points="13,18.8 18.7,18.8 18.7,22.6 10.5,22.6" fill="#8c8c8c"/><polygon points="18.7,19.5 25,16.3 25,19.3 20.5,22.6 18.7,22.6" fill="#c0c0c0"/></g><g transform="translate(8,32)"><rect x="0" y="0" width="16" height="16" fill="#c0c0c0"/><path d="M2,0.7 h8" fill="none" stroke="#808000" stroke-width="1.4"/><path d="M0.8,2.5 v4.5 h3" fill="none" stroke="#808000" stroke-width="1.4"/><path d="M3,3.5 l2.5,-1.5 l3,1.5 l-3,4 l-2.5,-1 z" fill="#0000ff" stroke="none" stroke-width="1"/><path d="M7,3 l3.5,-1.8 h2.5" fill="none" stroke="#000" stroke-width="1.3"/><path d="M7.5,6 l5,4" fill="none" stroke="#ffff00" stroke-width="1.2"/><rect x="4" y="4.5" width="2" height="2" fill="#000"/><rect x="2" y="9" width="14" height="3" fill="#000"/><rect x="3" y="10" width="12" height="1" fill="#c0c0c0"/><rect x="6" y="12" width="1.500" height="3" fill="#000"/><rect x="12" y="12" width="1.500" height="3" fill="#000"/></g><path d="M399,85.5 h6 l-3,-3.5 z M399,89.500 h6 l-3,3.500 z" fill="#202020"/><path d="M462,85.5 h6 l-3,-3.5 z M462,89.500 h6 l-3,3.500 z" fill="#202020"/><rect x="1147" y="736" width="2" height="2" fill="#bfbfbf"/><rect x="1144" y="736" width="2" height="2" fill="#bfbfbf"/><rect x="1141" y="736" width="2" height="2" fill="#bfbfbf"/><rect x="1147" y="733" width="2" height="2" fill="#bfbfbf"/><rect x="1144" y="733" width="2" height="2" fill="#bfbfbf"/><rect x="1147" y="730" width="2" height="2" fill="#bfbfbf"/></g></svg>
<div id="frame"></div>
</body></html>
